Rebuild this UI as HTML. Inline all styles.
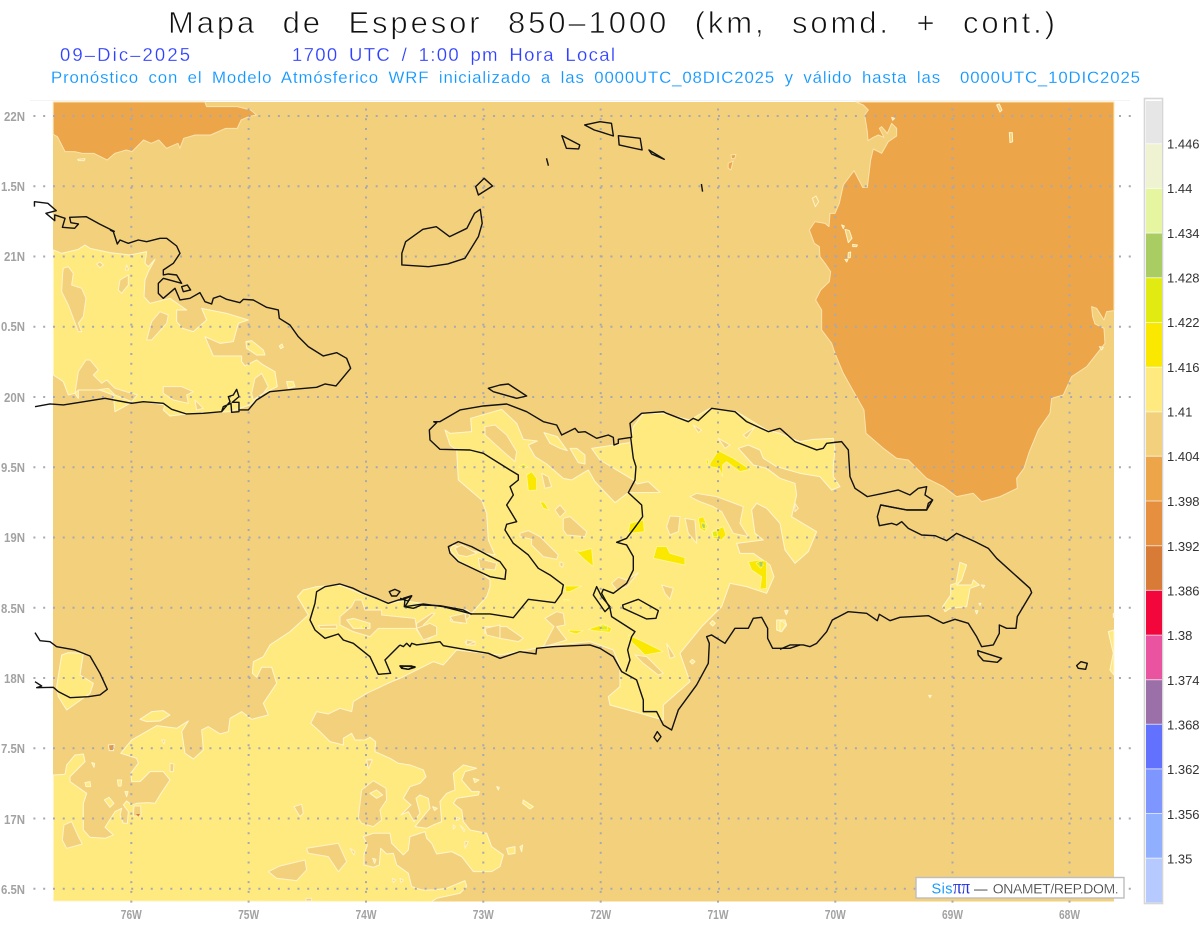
<!DOCTYPE html>
<html lang="es"><head><meta charset="utf-8"><title>Mapa de Espesor 850-1000</title>
<style>
html,body{margin:0;padding:0;background:#fff}
svg{display:block}
polygon,polyline{vector-effect:non-scaling-stroke;stroke-linejoin:round}
text{font-family:"Liberation Sans",sans-serif}
.o{fill:#eca548;stroke:#fbe3ad;stroke-width:1}
.b{fill:#f3d07c;stroke:#fff3c8;stroke-width:1}
.y{fill:#ffea80;stroke:#fff6d0;stroke-width:1}
.s{fill:#fbe800;stroke:#fff6a0;stroke-width:.8}
.g{fill:#e1eb12;stroke:#fff6a0;stroke-width:.6}
.c{fill:none;stroke:#111;stroke-width:1.4}
.gr{stroke:#a7a8b2;stroke-width:2;stroke-dasharray:2 7.78;fill:none}
.ax{fill:#a2a2a2;font-weight:bold;font-size:13px}
.lg{fill:#333;font-size:13px}
</style></head><body>
<svg xmlns="http://www.w3.org/2000/svg" width="1200" height="927" viewBox="0 0 1200 927">
<rect width="1200" height="927" fill="#fff"/>
<rect x="30" y="100" width="1100" height="1" fill="#f4f4f4"/>
<rect x="53" y="102" width="1061" height="799.5" fill="#f3d07c"/>

<!-- NW orange (crop 1 coords) -->
<g transform="scale(.3827,.3333)">
<polygon class="o" points="139,403 150,410 170,455 195,455 215,460 245,460 280,480 300,460 330,450 345,455 375,420 395,430 415,420 435,445 465,430 470,445 480,415 510,405 550,405 590,385 620,385 630,360 650,350 670,345 655,330 620,320 575,320 540,320 535,306 139,306"/>
<polygon class="b" points="203,478 222,476 220,482 205,482"/>
</g>

<!-- NE orange (crop 9 coords) -->
<g transform="translate(780,100) scale(.3333)">
<polygon class="o" points="228,6 250,15 265,30 254,45 258,70 262,95 264,122 280,112 295,105 312,112 298,85 305,80 322,100 335,70 350,85 350,108 325,125 305,160 280,147 272,180 262,262 248,262 222,212 190,255 178,310 165,340 150,340 147,380 135,370 105,365 88,390 103,430 118,440 120,470 135,490 152,515 148,545 122,570 107,600 125,630 125,690 155,730 165,760 190,820 232,895 252,930 258,1000 310,1045 350,1075 385,1080 440,1135 490,1160 530,1190 580,1180 605,1205 660,1190 712,1165 710,1135 732,1105 748,1055 775,990 810,940 815,895 850,885 875,830 920,800 975,730 972,685 945,672 938,650 935,620 950,625 972,660 980,635 1002,632 1002,6"/>
<polygon class="b" points="650,15 658,12 666,30 660,36"/>
<polygon class="b" points="688,98 697,98 698,125 690,128"/>
<polygon class="b" points="97,295 108,288 116,305 106,320"/>
<polygon class="b" points="195,388 208,392 216,415 205,428"/>
<polygon class="b" points="218,433 232,435 230,440 218,440"/>
<polygon class="b" points="205,458 212,456 211,473 204,474"/>
<polygon class="b" points="195,478 204,478 200,486"/>
<polygon class="b" points="185,375 193,378 190,386"/>
<polygon class="b" points="958,740 970,742 965,750"/>
<polygon class="b" points="335,52 344,55 338,61"/>
</g>
<g transform="translate(600,0) scale(.3827,.3333)">
<polygon class="o" points="342,465 355,463 352,476 344,476"/>
<polygon class="o" points="335,490 348,483 342,510 335,505"/>
</g>

<!-- Main yellow (crop 3 coords) -->
<g transform="translate(400,380) scale(.3333)">
<polygon class="y" points="-1040,1563 -1040,1185 -1005,1183 -1000,1155 -975,1125 -950,1122 -945,1145 -960,1160 -990,1190 -990,1205 -940,1240 -950,1270 -950,1350 -930,1372 -885,1375 -860,1365 -885,1342 -855,1295 -835,1285 -840,1305 -830,1330 -818,1330 -815,1295 -830,1275 -820,1263 -805,1275 -790,1270 -755,1268 -735,1270 -720,1245 -690,1200 -710,1175 -750,1175 -780,1205 -805,1205 -808,1180 -785,1150 -790,1135 -838,1120 -805,1080 -730,1037 -670,1045 -635,1023 -655,1055 -645,1120 -620,1137 -590,1110 -595,1050 -575,1040 -540,1062 -515,1055 -510,1015 -475,995 -445,1018 -395,1005 -410,970 -370,910 -385,862 -415,862 -430,892 -443,880 -440,845 -410,830 -390,795 -330,755 -275,705 -308,650 -290,630 -250,620 -180,615 -120,640 -70,655 -30,670 10,662 100,675 200,690 215,700 260,650 270,620 270,600 240,575 180,545 150,510 160,495 200,510 285,525 265,480 260,400 245,360 175,300 170,210 150,195 135,150 150,160 215,155 212,115 305,88 350,130 370,178 412,183 385,195 405,230 440,252 490,295 515,300 565,270 585,305 645,368 685,338 780,337 745,305 712,312 700,300 650,270 600,240 575,205 690,188 700,140 730,100 790,100 870,120 930,85 1010,95 1100,150 1140,160 1200,185 1240,178 1300,175 1305,210 1300,260 1300,290 1320,320 1295,330 1260,290 1200,280 1130,260 1090,235 1080,210 1045,195 1015,205 1060,255 1100,265 1140,295 1185,310 1190,345 1175,410 1250,455 1225,515 1185,550 1155,510 1140,430 1100,385 1070,370 1055,390 1065,460 1090,480 1010,490 1020,520 1060,520 1110,555 1122,590 1100,640 1040,620 990,610 965,680 905,740 840,820 870,905 790,975 790,1020 720,1000 630,975 625,950 660,920 660,860 640,810 570,785 470,795 430,800 360,815 300,825 170,810 130,855 100,845 0,895 -25,905 -100,940 -140,965 -145,995 -180,985 -215,1002 -250,995 -268,1030 -235,1060 -210,1085 -170,1095 -170,1075 -145,1060 -135,1080 -105,1080 -90,1072 -73,1085 -75,1115 -30,1135 -5,1150 30,1155 70,1170 78,1190 60,1210 30,1220 10,1255 33,1275 3,1305 25,1295 42,1325 60,1300 48,1255 60,1245 85,1255 90,1285 65,1315 45,1340 80,1345 100,1335 125,1325 120,1265 140,1240 165,1230 160,1180 190,1155 230,1165 195,1175 185,1200 215,1235 238,1235 235,1245 170,1255 160,1270 185,1290 190,1325 210,1350 260,1360 275,1400 310,1425 300,1460 275,1475 220,1475 185,1430 155,1415 110,1422 95,1390 80,1375 75,1355 30,1370 25,1410 10,1425 -25,1390 -30,1360 -80,1360 -110,1370 -98,1395 -108,1425 -108,1455 -80,1462 -62,1455 -58,1405 -40,1422 -20,1420 -10,1455 25,1480 35,1520 65,1530 100,1530 140,1525 195,1502 200,1520 180,1540 110,1555 95,1565"/>

<!-- holes -->
<polygon class="b" points="255,140 285,135 320,165 350,215 345,245 310,215 255,165"/>
<polygon class="b" points="425,280 445,290 455,320 435,325"/>
<polygon class="b" points="465,390 480,375 497,395 480,412"/>
<polygon class="b" points="490,415 510,410 560,455 555,470 500,465 490,450"/>
<polygon class="b" points="360,460 385,452 420,470 475,525 470,538 430,530 395,495 395,478 360,470"/>
<polygon class="b" points="480,545 490,550 488,562 480,558"/>
<polygon class="b" points="235,535 290,550 285,570 240,565"/>
<polygon class="b" points="165,505 185,495 230,520 200,530 175,525"/>
<polygon class="b" points="635,610 655,592 680,600 715,578 680,620 650,630"/>
<polygon class="b" points="785,615 820,625 810,658 795,640"/>
<polygon class="b" points="870,350 890,340 950,350 1030,380 1020,430 1045,470 1000,460 965,395 940,380 900,365"/>
<polygon class="b" points="810,408 840,410 835,455 810,465 800,440"/>
<polygon class="b" points="855,415 885,420 890,490 865,460"/>
<polygon class="b" points="880,135 905,150 895,158"/>
<polygon class="b" points="955,175 990,195 975,205"/>
<polygon class="b" points="1030,165 1065,140 1040,175"/>
<polygon class="b" points="705,825 740,830 790,880 775,885 730,850"/>
<polygon class="b" points="800,790 825,830 810,835"/>
<polygon class="b" points="255,740 320,740 370,775 355,785 300,775 255,760"/>
<polygon class="b" points="150,720 205,700 210,710 185,730 155,725"/>
<polygon class="b" points="50,730 95,700 105,700 70,735 105,765 75,785 50,750"/>
<polygon class="b" points="195,785 225,785 225,795 200,795"/>
<polygon class="b" points="435,715 470,695 490,700 495,735 470,740 500,780 450,795 430,800 462,740"/>
<polygon class="b" points="1185,370 1195,385 1185,395"/>
<polygon class="y" points="432,158 472,170 502,212 480,205 450,190"/>
<polygon class="y" points="510,205 530,205 555,225 555,252 535,248"/>
<polygon class="y" points="1130,720 1155,720 1160,735 1145,755 1130,750"/>
<polygon class="y" points="870,845 877,838 885,845 877,852"/>
<polygon class="y" points="930,730 938,722 946,730 938,738"/>

<!-- saturated yellow -->
<polygon class="s" points="930,250 955,212 1000,235 1050,268 1020,275 980,245 968,255 968,290 958,265 930,260"/>
<polygon class="s" points="380,285 395,275 410,295 410,330 385,332"/>
<polygon class="s" points="355,262 370,252 385,262"/>
<polygon class="s" points="420,365 433,367 447,390 430,385"/>
<polygon class="s" points="525,510 540,515 575,505 580,560 555,540"/>
<polygon class="s" points="495,618 545,618 510,635 497,635"/>
<polygon class="s" points="490,658 510,660 495,663"/>
<polygon class="s" points="690,430 730,420 733,455 690,460 685,455"/>
<polygon class="s" points="770,500 800,500 810,520 855,533 855,555 760,535"/>
<polygon class="s" points="505,750 550,752 530,762 510,757"/>
<polygon class="s" points="565,748 610,732 635,745 630,757 580,752"/>
<polygon class="s" points="685,765 730,785 790,815 735,825 715,805 693,785"/>
<polygon class="s" points="1045,545 1080,540 1100,545 1100,625 1080,628 1085,590 1055,570"/>
<polygon class="s" points="895,415 910,410 922,440 915,455 900,445"/>
<polygon class="s" points="935,455 970,440 978,465 965,480 940,475"/>
<polygon class="s" points="918,240 926,240 925,252 920,252"/>
<polygon class="g" points="905,428 915,430 918,447 908,445"/>
<polygon class="g" points="937,456 950,452 953,470 940,470"/>
<polygon class="g" points="600,738 622,738 624,750 604,750"/>
<polygon class="g" points="1068,550 1082,542 1090,556 1082,565"/>
<polygon points="1078,546 1088,546 1087,560 1080,558" fill="#a9cd62"/>
<polygon points="906,432 914,434 914,444 908,442" fill="#a9cd62"/>
</g>

<!-- crop 8 features -->
<g transform="translate(0,560) scale(.3333)">
<polygon class="y" points="170,380 185,285 205,278 250,280 240,345 280,370 270,400 200,450 175,410"/>
<polygon class="y" points="420,478 455,455 490,452 510,465 480,483 440,485"/>
<polygon class="b" points="1020,195 1020,170 1055,140 1065,120 1085,120 1095,150 1145,150 1145,165 1245,175 1250,205 1290,190 1310,200 1310,225 1270,240 1250,205 1135,205 1110,230 1060,215"/>
<polygon class="y" points="1040,180 1060,175 1110,190 1110,205 1060,205"/>
<polygon class="b" points="955,197 1010,195 1010,205 960,205"/>
<polygon class="b" points="1350,170 1395,160 1400,190 1360,185"/>
<polygon class="b" points="1455,205 1500,195 1500,235 1460,225"/>
<polygon class="b" points="1400,240 1425,245 1400,255"/>
<polygon class="b" points="1075,775 1085,690 1120,662 1158,685 1160,720 1140,750 1145,780 1120,800 1085,790"/>
<polygon class="y" points="1110,700 1130,690 1148,705 1130,715"/>
<polygon class="y" points="1118,895 1128,898 1124,910"/>
<polygon class="b" points="192,795 215,785 235,830 247,852 200,865 187,840"/>
<polygon class="b" points="882,740 905,733 910,760 900,770"/>
<polygon class="b" points="920,865 1015,850 1040,905 1015,935 985,890 925,880"/>
<polygon class="b" points="805,935 840,918 915,900 920,930 890,962 830,955"/>
<polygon class="b" points="1100,600 1115,598 1105,625"/>
<polygon class="b" points="510,610 522,612 520,635 510,635"/>
<polygon class="b" points="485,540 495,540 492,552"/>
<polygon class="b" points="918,1015 935,1015 935,1023 918,1023"/>
<polygon class="y" points="1420,655 1437,660 1425,668"/>
<polygon class="y" points="1298,740 1312,745 1304,752"/>
<polygon class="y" points="255,668 270,665 272,680 258,680"/>
<polygon class="y" points="352,660 365,660 363,678 355,678"/>
<polygon class="y" points="375,695 384,695 380,710"/>
<polygon class="y" points="313,720 327,712 342,730 330,742"/>
<polygon class="y" points="275,608 284,610 282,622"/>
<polygon class="b" points="402,738 422,738 423,768 400,768"/>
<polygon points="325,555 343,553 340,572 328,572" fill="#e0984c" stroke="#fff3c8"/>
<polygon points="408,762 420,762 415,770" fill="#d87b37"/>
<polygon class="s" points="1082,198 1096,198 1092,206"/>
</g>

<!-- south small features (crop A coords) -->
<g transform="translate(340,730) scale(.3333)">
<polygon class="y" points="550,210 580,230 570,237 548,220"/>
<polygon class="y" points="500,355 525,350 525,370 505,373"/>
<polygon class="y" points="540,350 548,345 545,365"/>
<polygon class="y" points="470,170 478,172 475,180"/>
<polygon class="b" points="80,90 97,90 85,118"/>
<polygon class="b" points="375,335 385,335 375,355"/>
<polygon class="b" points="360,285 375,300 372,305"/>
<polygon class="b" points="340,285 347,290 340,297"/>
<polygon class="b" points="350,262 360,265 350,272"/>
<polygon class="b" points="30,355 45,365 42,375"/>
<polygon class="b" points="157,445 167,450 160,458"/>
<polygon class="b" points="180,445 190,450 183,458"/>
</g>

<!-- crop 4 Cuba yellow -->
<g transform="translate(0,230) scale(.3333)">
<polygon class="y" points="160,60 185,70 235,58 255,45 270,55 330,68 390,75 440,65 435,100 445,110 465,88 445,125 435,150 432,200 450,220 510,205 560,240 530,240 530,275 548,295 580,305 620,270 605,235 680,250 745,270 715,280 700,335 660,340 615,320 640,378 725,378 725,395 735,408 770,390 790,405 825,425 832,470 790,490 750,525 690,545 560,552 510,558 490,540 495,525 430,515 390,520 345,545 340,495 300,480 235,480 235,505 225,490 205,495 190,455 160,435"/>
<polygon class="b" points="190,115 205,110 220,130 215,165 245,175 258,205 250,260 235,280 245,305 235,305 220,265 205,225 185,185 188,130"/>
<polygon class="b" points="355,180 360,150 385,135 385,165 365,190"/>
<polygon class="b" points="440,330 455,275 480,245 505,255 500,280 455,330"/>
<polygon class="b" points="258,390 270,390 295,420 280,435 305,460 320,450 345,475 395,490 412,495 395,515 345,495 325,475 290,480 235,480 225,490 235,425"/>
<polygon class="b" points="490,470 545,470 580,485 560,495 565,520 520,510 490,490"/>
<polygon class="b" points="585,510 610,535 590,540"/>
<polygon class="b" points="755,490 765,445 785,430 805,470 790,490 760,510"/>
<polygon class="b" points="380,105 386,120 376,120"/>
<polygon class="b" points="290,102 300,96 310,105 300,113"/>
<polygon class="y" points="738,335 755,332 790,360 795,375 770,375 740,355"/>
<polygon class="y" points="860,455 880,455 885,470 865,475"/>
<polygon class="y" points="838,348 846,342 850,352 842,356"/>
</g>

<!-- crop 10 yellow -->
<g transform="translate(780,500) scale(.3333)">
<polygon class="y" points="540,187 560,195 545,240 530,255 575,255 580,240 598,255 570,265 560,320 510,325 495,335 488,320 512,285 512,255 528,250"/>
<polygon class="y" points="985,395 1002,390 1002,525 990,510 1000,460"/>
<polygon class="y" points="1000,340 1002,340 1002,352 1000,352"/>
<polygon class="y" points="604,255 614,256 610,264"/>
<polygon class="y" points="586,332 594,332 590,342"/>
<polygon class="y" points="597,310 603,310 600,316"/>
<polygon class="y" points="446,586 454,586 450,593"/>
<polygon class="y" points="14,332 24,332 19,344"/>
<polygon class="y" points="0,360 18,372 5,395 0,395"/>
</g>

<!-- grid -->
<g class="gr">
<path d="M33.4 116H1131M33.4 186.3H1131M33.4 256.5H1131M33.4 326.8H1131M33.4 397H1131M33.4 467.2H1131M33.4 537.5H1131M33.4 607.8H1131M33.4 678H1131M33.4 748.3H1131M33.4 818.5H1131M33.4 888.8H1131"/>
<path d="M131.3 108.5V906M248.6 108.5V906M366 108.5V906M483.3 108.5V906M600.7 108.5V906M718 108.5V906M835.3 108.5V906M952.5 108.5V906M1069.5 108.5V906"/>
</g>

<!-- Coastlines crop 3 -->
<g transform="translate(400,380) scale(.3333)">
<polyline class="c" points="100,125 120,125 180,90 250,78 320,72 380,95 430,125 470,135 485,165 525,145 535,157 555,155 590,175 625,165 640,172 642,195 655,190 655,178 695,172 690,130 725,100 790,95 800,100 865,125 880,115 895,122 935,85 1005,95 1040,125 1105,155 1140,145"/>
<polyline class="c" points="692,172 700,235 708,260 705,300 685,338 725,375 728,410 710,435 680,475 650,487 680,495 700,530 700,570 680,610 640,640 610,628 605,640 630,685 635,710 705,755 695,770 683,810 690,840 678,875"/>
<polyline class="c" points="0,795 10,800 20,790 30,800 35,790 50,795 120,785 130,797 175,805 265,820 300,835 360,815 408,822 410,805 460,800 570,795 600,805 640,830 665,875 710,900 730,960 730,995 770,995 790,1035 815,1050 835,990 890,915 925,850 928,790 920,770 935,765 975,790 1005,745 1045,745 1060,715 1085,712 1103,745 1103,775 1118,805 1170,805 1200,795"/>
<polyline class="c" points="0,655 10,658 35,648 15,680 70,672 130,680 215,702 270,702 340,713 385,658 465,668 485,640 490,615 450,585 415,565 385,525 340,490 315,450 320,433 350,425 320,375 340,345 330,320 355,300 355,285 330,270 250,220 210,210 120,208 90,180 88,150 110,128 100,125"/>
<polygon class="c" points="145,500 175,485 215,500 300,545 318,570 315,598 270,590 175,545 150,520"/>
<polygon class="c" points="265,25 300,15 325,12 380,48 350,55 280,35"/>
<polygon class="c" points="762,1072 772,1055 783,1070 772,1085"/>
<polygon class="c" points="590,620 580,645 615,695 630,680 605,650"/>
<polygon class="c" points="668,675 715,658 775,692 768,715 740,717 670,685"/>
<polygon class="c" points="0,858 35,858 45,862 25,868 5,865"/>
</g>
<!-- crop 10 -->
<g transform="translate(780,500) scale(.3333)">
<polyline class="c" points="0,448 30,435 70,435 90,440 110,430 140,395 157,360 205,335 260,340 292,362 298,343 330,362 360,352 445,347 490,370 525,358 565,370 590,410 605,440 640,435 658,400 658,375 680,385 708,385 712,350 755,278 750,265 650,175 625,145 585,125 530,100 500,122 465,107 425,105 385,85 365,65 350,75 335,70 298,77 292,50 302,15 380,30 440,30 445,10 458,0"/>
<polygon class="c" points="593,452 665,475 652,487 610,482 595,465"/>
<polygon class="c" points="890,497 903,485 922,490 917,508 895,505"/>
</g>
<!-- crop 9 -->
<g transform="translate(780,100) scale(.3333)">
<polyline class="c" points="0,985 45,1025 110,1050 130,1045 140,1030 185,1025 205,1050 210,1130 225,1165 262,1190 310,1180 355,1170 390,1185 415,1165 440,1160 435,1185 458,1200 440,1230 380,1230 302,1215"/>
</g>
<!-- crop 8 -->
<g transform="translate(0,560) scale(.3333)">
<polyline class="c" points="105,218 120,242 150,245 170,260 225,270 270,288 300,340 322,388 300,405 265,410 210,413 175,395 160,382 110,383 125,378 105,365"/>
<polyline class="c" points="1200,255 1155,300 1172,340 1135,343 1110,290 1060,250 1030,240 1015,222 975,235 945,210 930,180 945,130 950,95 975,80 1020,72 1060,85 1090,100 1130,115 1165,130 1195,120 1215,118 1213,140 1240,145 1265,135 1320,137 1390,150 1415,163"/>
<polygon class="c" points="1168,95 1185,88 1200,95 1190,108 1175,108"/>
<polygon class="c" points="1210,115 1235,107 1225,123 1213,120"/>
<polygon class="c" points="1200,318 1245,320 1225,328 1210,325"/>
</g>
<!-- crop 4 Cuba -->
<g transform="translate(0,230) scale(.3333)">
<polyline class="c" points="105,530 150,522 190,525 240,517 315,505 395,520 430,515 490,520 515,538 560,552 610,550 665,545 690,515 685,500 700,495 710,478 717,500 697,517 717,517 717,545 695,547 693,520 670,530 665,545"/>
<polyline class="c" points="717,540 745,540 770,510 810,485 880,478 950,472 975,462 1008,468 1052,415 1040,385 1010,368 970,378 925,350 895,320 870,285 838,265 835,240 800,232 760,210 730,208 720,218 680,208 660,198 640,205 635,222 615,215 600,188 570,205 540,210 525,175 490,205 475,190 475,160 490,145 545,160 530,135 505,132 490,135 490,120 520,100 540,70 530,48 500,25 480,25 440,35 415,30 385,40 360,30 352,42 340,5 330,0"/>
<polygon class="c" points="545,170 562,165 572,180 550,185"/>
</g>
<!-- crop 1 -->
<g transform="scale(.3827,.3333)">
<polyline class="c" points="90,620 90,605 125,610 147,632 120,640 143,662 143,645 170,655 163,682 195,685 205,672 185,668 182,652 225,650 260,672 300,695"/>
<polygon class="c" points="1243,560 1265,535 1287,558 1250,585"/>
<polygon class="c" points="1050,760 1060,725 1105,688 1140,680 1175,710 1220,685 1240,640 1255,628 1260,670 1250,710 1215,775 1170,792 1120,800 1050,795"/>
<polyline class="c" points="1428,475 1433,497"/>
<polygon class="c" points="1468,407 1515,435 1512,447 1480,445"/>
</g>
<g transform="translate(600,0) scale(.3827,.3333)">
<polygon class="c" points="-40,375 0,365 30,370 35,408 0,395 -15,390"/>
<polygon class="c" points="48,407 105,415 110,450 50,435"/>
<polygon class="c" points="128,450 168,478 135,462"/>
<polyline class="c" points="265,552 268,575"/>
</g>

<!-- Titles -->
<text x="168" y="33" font-size="31" textLength="887" fill="#111" stroke="#fff" stroke-width=".75" style="word-spacing:14px">Mapa de Espesor 850–1000 (km, somd. + cont.)</text>
<text x="60" y="61" font-size="18.5" textLength="130" fill="#2f40ff" stroke="#fff" stroke-width=".2">09–Dic–2025</text>
<text x="292" y="61" font-size="18.5" textLength="323" fill="#2f40ff" stroke="#fff" stroke-width=".2" style="word-spacing:4px">1700 UTC / 1:00 pm Hora Local</text>
<text x="51" y="83" font-size="16.8" textLength="1089" fill="#1096ff" stroke="#fff" stroke-width=".15" style="word-spacing:4px">Pronóstico con el Modelo Atmósferico WRF inicializado a las 0000UTC_08DIC2025 y válido hasta las &#160;0000UTC_10DIC2025</text>

<!-- Axis labels -->
<g class="ax" text-anchor="end">
<text x="25" y="121" textLength="21" lengthAdjust="spacingAndGlyphs">22N</text>
<text x="25" y="191" textLength="24" lengthAdjust="spacingAndGlyphs">1.5N</text>
<text x="25" y="261" textLength="21" lengthAdjust="spacingAndGlyphs">21N</text>
<text x="25" y="331" textLength="24" lengthAdjust="spacingAndGlyphs">0.5N</text>
<text x="25" y="402" textLength="21" lengthAdjust="spacingAndGlyphs">20N</text>
<text x="25" y="472" textLength="24" lengthAdjust="spacingAndGlyphs">9.5N</text>
<text x="25" y="542" textLength="21" lengthAdjust="spacingAndGlyphs">19N</text>
<text x="25" y="613" textLength="24" lengthAdjust="spacingAndGlyphs">8.5N</text>
<text x="25" y="683" textLength="21" lengthAdjust="spacingAndGlyphs">18N</text>
<text x="25" y="753" textLength="24" lengthAdjust="spacingAndGlyphs">7.5N</text>
<text x="25" y="824" textLength="21" lengthAdjust="spacingAndGlyphs">17N</text>
<text x="25" y="894" textLength="24" lengthAdjust="spacingAndGlyphs">6.5N</text>
</g>
<g class="ax" text-anchor="middle">
<text x="131.3" y="919" textLength="21" lengthAdjust="spacingAndGlyphs">76W</text>
<text x="248.6" y="919" textLength="21" lengthAdjust="spacingAndGlyphs">75W</text>
<text x="366" y="919" textLength="21" lengthAdjust="spacingAndGlyphs">74W</text>
<text x="483.3" y="919" textLength="21" lengthAdjust="spacingAndGlyphs">73W</text>
<text x="600.7" y="919" textLength="21" lengthAdjust="spacingAndGlyphs">72W</text>
<text x="718" y="919" textLength="21" lengthAdjust="spacingAndGlyphs">71W</text>
<text x="835.3" y="919" textLength="21" lengthAdjust="spacingAndGlyphs">70W</text>
<text x="952.5" y="919" textLength="21" lengthAdjust="spacingAndGlyphs">69W</text>
<text x="1069.5" y="919" textLength="21" lengthAdjust="spacingAndGlyphs">68W</text>
</g>

<!-- Logo box -->
<rect x="916" y="877.5" width="208" height="20.5" fill="#fff" stroke="#bdbdbd" stroke-width="1.4"/>
<text x="931.5" y="893.5" font-size="14.5" fill="#1a9bff" textLength="21">Sis</text>
<text x="953" y="893.5" font-size="20" font-family="Liberation Serif" fill="#2233dd" textLength="17" lengthAdjust="spacingAndGlyphs" style="font-family:'Liberation Serif',serif">ππ</text>
<text x="974" y="893.5" font-size="13.5" fill="#444" textLength="10">—</text>
<text x="992.7" y="893.5" font-size="14" fill="#444" textLength="126" stroke="#fff" stroke-width=".2">ONAMET/REP.DOM.</text>

<!-- Legend -->
<rect x="1144.5" y="98.5" width="18" height="805" fill="#fff" stroke="#d6d6d6" stroke-width="1.6"/>
<g>
<rect x="1146" y="101" width="16" height="42.7" fill="#e6e6e6"/>
<rect x="1146" y="143.7" width="16" height="44.7" fill="#eff3d2"/>
<rect x="1146" y="188.4" width="16" height="44.7" fill="#e6f5a0"/>
<rect x="1146" y="233.1" width="16" height="44.7" fill="#a9cd62"/>
<rect x="1146" y="277.8" width="16" height="44.7" fill="#e1eb12"/>
<rect x="1146" y="322.5" width="16" height="44.7" fill="#fbe800"/>
<rect x="1146" y="367.2" width="16" height="44.7" fill="#ffea80"/>
<rect x="1146" y="411.9" width="16" height="44.4" fill="#f3d07c"/>
<rect x="1146" y="456.3" width="16" height="44.7" fill="#eca548"/>
<rect x="1146" y="501" width="16" height="44.7" fill="#e68f3f"/>
<rect x="1146" y="545.7" width="16" height="44.7" fill="#d87b37"/>
<rect x="1146" y="590.4" width="16" height="44.7" fill="#f3063b"/>
<rect x="1146" y="635.1" width="16" height="44.6" fill="#ea539f"/>
<rect x="1146" y="679.7" width="16" height="44.6" fill="#9b6fa7"/>
<rect x="1146" y="724.3" width="16" height="44.6" fill="#6372fe"/>
<rect x="1146" y="768.9" width="16" height="44.6" fill="#7e96ff"/>
<rect x="1146" y="813.5" width="16" height="44.6" fill="#90afff"/>
<rect x="1146" y="858.1" width="16" height="44.4" fill="#b6caff"/>
</g>
<path d="M1146 143.7h16M1146 188.4h16M1146 233.1h16M1146 277.8h16M1146 322.5h16M1146 367.2h16M1146 411.9h16M1146 456.3h16M1146 501h16M1146 545.7h16M1146 590.4h16M1146 635.1h16M1146 679.7h16M1146 724.3h16M1146 768.9h16M1146 813.5h16M1146 858.1h16" stroke="#fff" stroke-opacity=".65" stroke-width="1" fill="none"/>
<g class="lg">
<text x="1167" y="148.5">1.446</text>
<text x="1167" y="193">1.44</text>
<text x="1167" y="238">1.434</text>
<text x="1167" y="282.5">1.428</text>
<text x="1167" y="327">1.422</text>
<text x="1167" y="372">1.416</text>
<text x="1167" y="416.5">1.41</text>
<text x="1167" y="461">1.404</text>
<text x="1167" y="506">1.398</text>
<text x="1167" y="551">1.392</text>
<text x="1167" y="595.5">1.386</text>
<text x="1167" y="640">1.38</text>
<text x="1167" y="685">1.374</text>
<text x="1167" y="729.5">1.368</text>
<text x="1167" y="774">1.362</text>
<text x="1167" y="819">1.356</text>
<text x="1167" y="863.5">1.35</text>
</g>
</svg>
</body></html>
